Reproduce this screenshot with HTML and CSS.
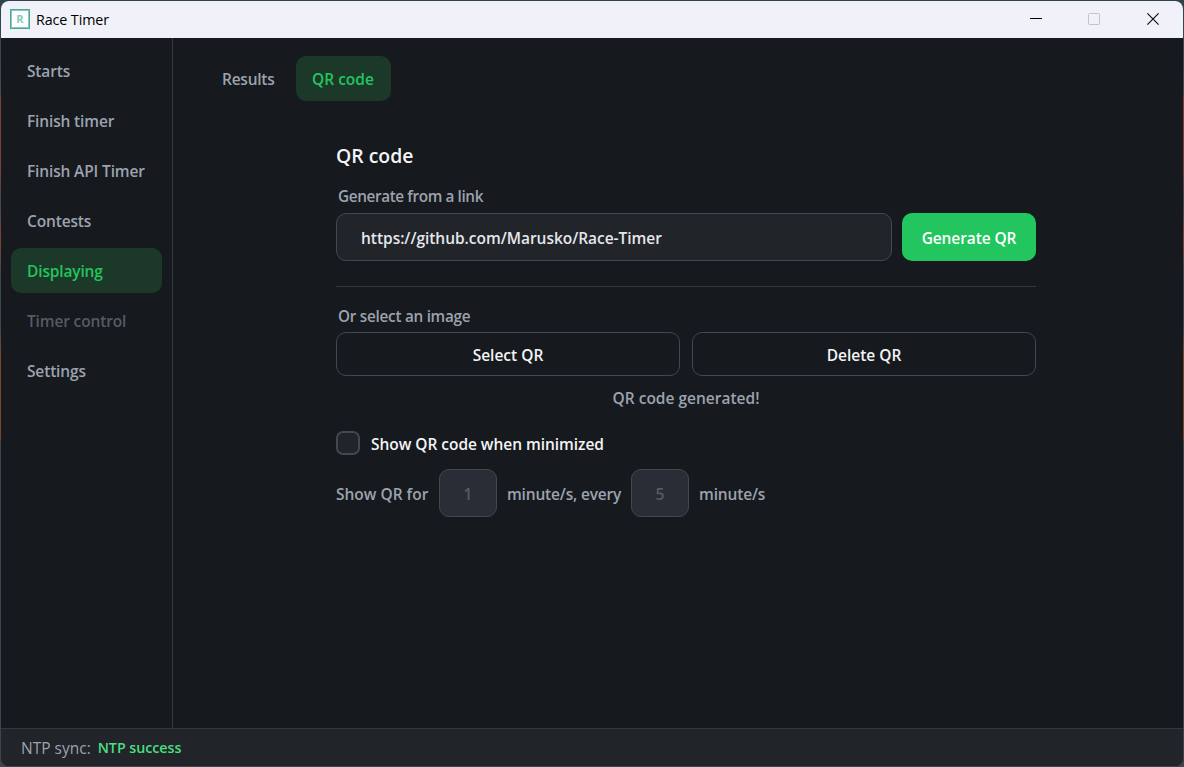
FILE: index.html
```html
<!DOCTYPE html>
<html lang="en">

<head>
    <meta charset="UTF-8">
    <meta name="viewport" content="width=device-width, initial-scale=1.0">
    <title>Race Timer</title>
    <link rel="stylesheet" href="styles.css">
</head>

<body>
    <div class="window">
        <header class="titlebar">
            <div class="logo">R</div>
            <span class="app-name">Race Timer</span>
            <div class="controls">
                <svg width="12" height="12" viewBox="0 0 12 12">
                    <path d="M0 5.5h12" stroke="#000" />
                </svg>
                <svg width="12" height="12" viewBox="0 0 12 12">
                    <rect x=".5" y=".5" width="11" height="11" rx="1" fill="none" stroke="#c3c4c9" />
                </svg>
                <svg class="close" width="12" height="12" viewBox="0 0 12 12">
                    <path d="M.4.4l11.2 11.2M11.6.4L.4 11.6" stroke="#111" stroke-width="1.2" />
                </svg>
            </div>
        </header>
        <div class="body">
            <nav class="side">
                <a class="item"><span>Starts</span></a>
                <a class="item"><span>Finish timer</span></a>
                <a class="item"><span>Finish API Timer</span></a>
                <a class="item"><span>Contests</span></a>
                <a class="item active"><span>Displaying</span></a>
                <a class="item disabled"><span>Timer control</span></a>
                <a class="item"><span>Settings</span></a>
            </nav>
            <main class="main">
                <div class="tabs">
                    <a class="tab results">Results</a>
                    <a class="tab qr active">QR code</a>
                </div>
                <section class="content">
                    <h1 class="title">QR code</h1>
                    <div class="label from-link">Generate from a link</div>
                    <div class="link-row">
                        <input class="link" type="text" value="https://github.com/Marusko/Race-Timer">
                        <button class="btn primary">Generate QR</button>
                    </div>
                    <div class="line"></div>
                    <div class="label">Or select an image</div>
                    <div class="image-row">
                        <button class="btn">Select QR</button>
                        <button class="btn">Delete QR</button>
                    </div>
                    <div class="status">QR code generated!</div>
                    <div class="check-row">
                        <span class="checkbox"></span>
                        <span class="check-text">Show QR code when minimized</span>
                    </div>
                    <div class="time-row">
                        <span class="for">Show QR for</span>
                        <input class="num" type="text" value="1" disabled>
                        <span class="every">minute/s, every</span>
                        <input class="num" type="text" value="5" disabled>
                        <span class="end">minute/s</span>
                    </div>
                </section>
            </main>
        </div>
        <footer class="footer">
            <span class="ntp">NTP sync:</span>
            <span class="ntp-state">NTP success</span>
        </footer>
    </div>
</body>

</html>
```
FILE: styles.css
```css
* {
    margin: 0;
    padding: 0;
    box-sizing: border-box;
}

body {
    width: 1184px;
    height: 767px;
    overflow: hidden;
    background: linear-gradient(#30434b 0, #414a50 90px, #7a4336 100px, #7a4336 165px, #3d4950 200px, #7a4336 240px, #3d4950 275px, #3d4950 330px, #74492f 350px, #74492f 435px, #3b474c 445px, #3b474c 100%);
    font-family: "Open Sans", "Noto Sans", sans-serif;
    font-size: 15.5px;
    font-weight: 600;
    color: #9ca3af;
}

.window {
    display: flex;
    flex-direction: column;
    width: 1182px;
    height: 765px;
    margin: 1px;
    border-radius: 8px;
    overflow: hidden;
    background: #16191d;
}

.titlebar {
    display: flex;
    align-items: center;
    flex: none;
    height: 37px;
    padding: 0 24px 0 9px;
    background: #f1f2f9;
    color: #000;
}

.logo {
    width: 20px;
    height: 20px;
    margin-top: -1px;
    border: 1px solid #4aa899;
    box-shadow: inset 0 0 0 1px #8cc9bf;
    background: #fff;
    color: #82cbbd;
    font: bold 11px/18px "Open Sans", sans-serif;
    text-align: center;
}

.app-name {
    margin-left: 6px;
    font-size: 14.3px;
    font-weight: 400;
    letter-spacing: -.1px;
}

.controls {
    display: flex;
    gap: 46px;
    margin: -1px 0 0 auto;
}

.close {
    margin-left: 1px;
}

.body {
    display: flex;
    flex: 1;
}

.side {
    display: flex;
    flex-direction: column;
    gap: 5px;
    width: 172px;
    padding: 10px;
    border-right: 1px solid #34373c;
    letter-spacing: -.15px;
}

.item {
    height: 45px;
    padding: 0 16px;
    border-radius: 10px;
    line-height: 47px;
}

.item span {
    display: block;
    overflow: hidden;
    white-space: nowrap;
}

.active {
    background: #1c3829;
    color: #22c55e;
}

.disabled {
    color: #555b65;
}

.main {
    flex: 1;
    padding: 18px 33px;
}

.tabs {
    display: flex;
    gap: 6px;
}

.tab {
    height: 45px;
    padding: 0 16px;
    border-radius: 10px;
    line-height: 47px;
    white-space: nowrap;
}

.results {
    width: 84px;
    letter-spacing: -.25px;
}

.qr {
    width: 95px;
}

.content {
    width: 700px;
    margin: 42px 0 0 130px;
}

.title {
    height: 26px;
    font-size: 19.4px;
    font-weight: 600;
    line-height: 26px;
    color: #f3f4f6;
}

.label {
    height: 22px;
    padding-left: 2px;
    font-size: 15.3px;
    letter-spacing: -.27px;
    line-height: 21px;
}

.from-link {
    margin-top: 16px;
    letter-spacing: -.38px;
    line-height: 23px;
}

.link-row {
    display: flex;
    gap: 10px;
    margin-top: 6px;
}

.link {
    width: 556px;
    height: 48px;
    padding: 2px 24px 0;
    border: 1px solid #404854;
    border-radius: 10px;
    background: #212429;
    color: #e5e7eb;
    font: inherit;
    letter-spacing: -.03px;
}

.btn {
    flex: 1;
    height: 44px;
    padding-top: 2px;
    border: 1px solid #404854;
    border-radius: 10px;
    background: none;
    color: #f3f4f6;
    font: inherit;
    white-space: nowrap;
}

.primary {
    height: 48px;
    border: none;
    background: #22c55e;
    color: #fff;
    letter-spacing: -.1px;
}

.line {
    height: 1px;
    margin: 25px 0 19px;
    background: #34373c;
}

.image-row {
    display: flex;
    gap: 12px;
    margin-top: 4px;
}

.status {
    height: 22px;
    margin-top: 12px;
    line-height: 20px;
    text-align: center;
}

.check-row {
    display: flex;
    align-items: center;
    gap: 11px;
    height: 24px;
    margin-top: 21px;
    color: #f3f4f6;
}

.check-text {
    padding-top: 2px;
    letter-spacing: -.04px;
}

.checkbox {
    width: 24px;
    height: 24px;
    border: 2px solid #404854;
    border-radius: 7px;
    background: #212429;
}

.time-row {
    display: flex;
    align-items: center;
    gap: 10px;
    margin-top: 14px;
    white-space: nowrap;
}

.time-row span {
    padding-top: 2px;
}

.for {
    width: 93px;
}

.every {
    width: 114px;
    letter-spacing: -.18px;
}

.end {
    letter-spacing: -.15px;
}

.num {
    width: 58px;
    height: 48px;
    padding-top: 2px;
    border: 1px solid #404854;
    border-radius: 10px;
    background: #2a2d35;
    color: #555b65;
    font: inherit;
    text-align: center;
}

.footer {
    display: flex;
    align-items: center;
    gap: 7px;
    flex: none;
    height: 38px;
    padding-left: 20px;
    border-top: 1px solid #34373c;
    background: #212429;
}

.ntp {
    font-weight: 400;
}

.ntp-state {
    color: #4ade80;
    font-size: 14.3px;
    letter-spacing: -.05px;
}
```
